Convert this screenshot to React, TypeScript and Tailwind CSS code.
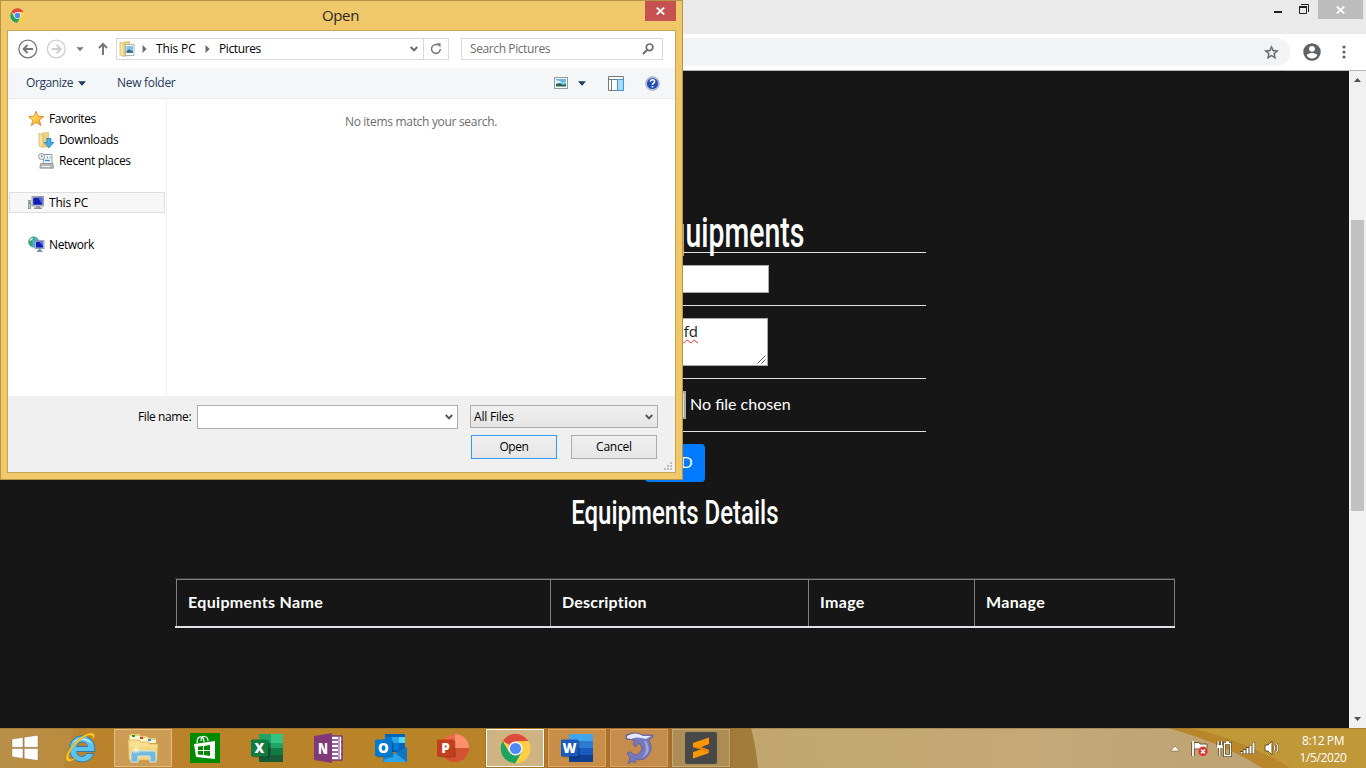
import React from "react";

const UI = "font-['Open_Sans','Noto_Sans',sans-serif]";

function ChromeLogo({ size }: { size: number }) {
  return (
    <svg width={size} height={size} viewBox="0 0 48 48">
      <circle cx="24" cy="24" r="23" fill="#ffcd46" />
      <path d="M24 24 4.1 12.5A23 23 0 0 1 43.9 12.5L24 13Z" fill="#dd4b3e" />
      <path d="M4.1 12.5A23 23 0 0 0 24 47L34 29.5 24 24 14 29.5Z" fill="#1da362" />
      <path d="M24 13H44.2A23 23 0 0 1 24 47L34 29Z" fill="#ffcd46" />
      <circle cx="24" cy="24" r="11" fill="#f3f3f3" />
      <circle cx="24" cy="24" r="8.7" fill="#4c8bf5" />
    </svg>
  );
}

function Chevron({ color = "#555" }: { color?: string }) {
  return (
    <svg width="8" height="6" viewBox="0 0 8 6">
      <path d="M.8 1 4 4.4 7.2 1" fill="none" stroke={color} strokeWidth="1.9" />
    </svg>
  );
}

function DownTri({ color }: { color: string }) {
  return (
    <svg width="8" height="5" viewBox="0 0 8 5">
      <path d="M0 .3H8L4 4.7Z" fill={color} />
    </svg>
  );
}

function Crumb() {
  return (
    <svg width="5" height="8" viewBox="0 0 5 8">
      <path d="M.5 0V8L4.7 4Z" fill="#6d6d6d" />
    </svg>
  );
}

function Folder({ kind }: { kind: "pictures" | "downloads" }) {
  return (
    <svg width="16" height="16" viewBox="0 0 16 16">
      <path d="M4.5 1 10.5 .5V15H4.5Z" fill="#ecd283" stroke="#c9a64b" strokeWidth=".5" />
      <path d="M1 1 5 2.8V15.6L1 14Z" fill="#f6e3a0" stroke="#cdaa50" strokeWidth=".6" />
      {kind === "pictures" ? (
        <g>
          <rect x="6.4" y="3.4" width="8.6" height="11" fill="#f8fafb" stroke="#9ba7ad" strokeWidth=".8" />
          <rect x="7.5" y="5" width="6.5" height="6.8" fill="#7fc1ec" />
          <path d="M7.5 10 10 8.6 14 10.4V11.8H7.5Z" fill="#26657d" />
        </g>
      ) : (
        <path d="M8.8 6.5H12.9V10.5H15.7L11 15.8 6.3 10.5H8.8Z" fill="#49ade9" stroke="#197bb8" strokeWidth=".8" />
      )}
    </svg>
  );
}

function StarIcon() {
  return (
    <svg width="17" height="16" viewBox="0 0 17 16">
      <defs>
        <linearGradient id="gold" x1="0" y1="0" x2="1" y2="1">
          <stop offset="0" stopColor="#fff19a" />
          <stop offset=".55" stopColor="#ffc83e" />
          <stop offset="1" stopColor="#f08b20" />
        </linearGradient>
      </defs>
      <path d="M8 .2 10 5.1 15.8 5.6 11.3 9 13 14.5 8.1 11.3 3.4 14.5 4.8 9.1.7 5.6 6.1 5.1Z" fill="url(#gold)" stroke="#df862b" strokeWidth=".9" />
    </svg>
  );
}

function RecentIcon() {
  return (
    <svg width="16" height="16" viewBox="0 0 16 16">
      <path d="M5.5 1.5H14V10.5H5.5Z" fill="#f7fafc" stroke="#929a9f" />
      <path d="M2.5 10.5H15L15.5 15.2H1.8Z" fill="#b4b8ba" stroke="#83898d" strokeWidth=".7" />
      <path d="M4 13.5H12" stroke="#eef1f2" />
      <path d="M9 4.5h1M11.5 4.5h1M7 7.5H12" stroke="#2d94cc" strokeWidth="1.4" />
      <circle cx="3.6" cy="3.5" r="3" fill="#eff3f5" stroke="#919aa0" />
      <path d="M3.5 1.8V3.6H5" fill="none" stroke="#68757e" strokeWidth=".8" />
    </svg>
  );
}

function PcIcon() {
  return (
    <svg width="17" height="16" viewBox="0 0 17 16">
      <rect x=".6" y="5.5" width="2" height="8.2" fill="#bcc4c9" stroke="#788087" strokeWidth=".7" />
      <path d="M1 8h1.2" stroke="#35a844" strokeWidth="1.5" />
      <rect x="4" y="1.4" width="11.6" height="9.6" fill="#c7ced4" stroke="#899198" strokeWidth=".8" />
      <rect x="5.2" y="2.6" width="9.2" height="7.2" fill="#101eb3" />
      <path d="M10 2.6H14.4V9.8Z" fill="#5265dd" />
      <path d="M8 11.3H12V12.6H14V14H6V12.6H8Z" fill="#8e9497" />
    </svg>
  );
}

function NetworkIcon() {
  return (
    <svg width="17" height="17" viewBox="0 0 17 17">
      <circle cx="5.7" cy="6" r="5.2" fill="#4bb1e5" stroke="#4792ba" strokeWidth=".6" />
      <path d="M2 3Q5 0 7 1L6 4 4 5 5 8 3 10Q0 7 2 3Z" fill="#38aa4e" />
      <path d="M2 3Q4 1.500 5.500 2L4 4 2 5Z" fill="#e4f7f2" />
      <rect x="7" y="4.7" width="9" height="8" fill="#c6d3df" stroke="#738698" strokeWidth=".7" />
      <rect x="8" y="5.6" width="7" height="6" fill="#111fb9" />
      <path d="M11 5.6H15V10Z" fill="#5872e6" />
      <path d="M10.5 13H12.8V14.5H14.5V16H9V14.5H10.5Z" fill="#778f9e" />
    </svg>
  );
}

function SideItem({ icon, label, className }: { icon: React.ReactNode; label: string; className: string }) {
  return (
    <div className={`flex h-[21px] items-center text-[12px] text-black ${className}`}>
      <span className="flex w-[21px] shrink-0">{icon}</span>
      <span className="whitespace-nowrap">{label}</span>
    </div>
  );
}

function OpenDialog() {
  return (
    <section className={`absolute left-0 top-0 flex h-[480px] w-[683px] flex-col border border-[#b39548] bg-[#f0c869] px-[6px] pb-[6px] text-[12px] ${UI}`}>
      <header className="flex h-[29px] shrink-0">
        <div className="flex w-[30px] items-center pl-[3px]"><ChromeLogo size={15} /></div>
        <div className="flex-1 pr-px pt-[4px] text-center text-[15px] leading-[21px] tracking-[-0.4px] text-[#2a2923]">Open</div>
        <button className="flex h-[20px] w-[31px] items-center justify-center bg-[#c75050]">
          <svg width="9" height="8" viewBox="0 0 9 8"><path d="M.8.5 8.2 7.5M8.2.5.8 7.5" stroke="#fff" strokeWidth="1.8" /></svg>
        </button>
      </header>

      <div className="flex h-[443px] w-[669px] flex-col border border-[#c6a555] bg-white">
        <div className="flex h-[37px] shrink-0 items-center pb-px pl-[10px]">
          <svg width="20" height="20" viewBox="0 0 20 20"><circle cx="9.8" cy="10" r="8.9" fill="none" stroke="#777" strokeWidth="1.3" /><path d="M15 10H6M9.5 6 5.7 10 9.5 14" fill="none" stroke="#777" strokeWidth="2" /></svg>
          <svg className="ml-[9px]" width="20" height="20" viewBox="0 0 20 20"><circle cx="9.3" cy="10" r="8.9" fill="none" stroke="#cfcfcf" strokeWidth="1.3" /><path d="M4.6 10H13.6M9.6 6 13.6 10 9.6 14" fill="none" stroke="#cfcfcf" strokeWidth="2" /></svg>
          <span className="ml-[9px] flex"><svg width="8" height="5" viewBox="0 0 8 5"><path d="M.5.3H7.5L4 4.3Z" fill="#777" /></svg></span>
          <svg className="ml-[13px]" width="12" height="14" viewBox="0 0 12 14"><path d="M6 13V2M2 6 6 2 10 6" fill="none" stroke="#777" strokeWidth="2" /></svg>
          <div className="ml-[7px] flex h-[22px] w-[333px] items-center border border-[#d9d9d9]">
            <span className="ml-[2px] flex w-[22px]"><Folder kind="pictures" /></span>
            <span className="ml-px flex"><Crumb /></span>
            <span className="ml-[9px] w-[42px] whitespace-nowrap tracking-[-0.15px]">This PC</span>
            <span className="ml-[7px] flex"><Crumb /></span>
            <span className="ml-[9px] flex-1 tracking-[-0.4px]">Pictures</span>
            <span className="mr-[5px] flex"><Chevron color="#666" /></span>
            <span className="flex h-[20px] w-[25px] items-center justify-center border-l border-[#d9d9d9]">
              <svg width="12" height="12" viewBox="0 0 12 12"><path d="M8 2.1A4.4 4.4 0 1 0 10.3 6" fill="none" stroke="#777" strokeWidth="1.5" /><path d="M6.4.2H10.5V4.4Z" fill="#777" /></svg>
            </span>
          </div>
          <div className="ml-[12px] flex h-[22px] w-[202px] items-center justify-between border border-[#d9d9d9] pl-[8px] pr-[8px] tracking-[-0.4px] text-[#6d6d6d]">
            <span>Search Pictures</span>
            <svg width="12" height="12" viewBox="0 0 12 12"><circle cx="7.6" cy="4.3" r="3.3" fill="none" stroke="#6d6d6d" strokeWidth="1.7" /><path d="M5.2 6.8 1 11" stroke="#6d6d6d" strokeWidth="2" /></svg>
          </div>
        </div>

        <div className="flex h-[31px] shrink-0 items-center border-b border-[#e8eaec] bg-[#f5f6f7] text-[#1e395b]">
          <span className="ml-[18px] w-[50px] whitespace-nowrap tracking-[-0.4px]">Organize</span>
          <span className="ml-[2px] flex"><DownTri color="#1e395b" /></span>
          <span className="ml-[31px] flex-1 tracking-[-0.3px]">New folder</span>
          <svg width="14" height="12" viewBox="0 0 14 12"><rect x=".5" y=".5" width="13" height="11" fill="#fff" stroke="#939aa1" /><path d="M2 2H12V9H2Z" fill="#65b8e5" /><path d="M2 3 6 4 8 6 12 5V6L2 7Z" fill="#d9f0fa" /><path d="M2 7 6 6 9 8 12 7V9.6H2Z" fill="#276550" /></svg>
          <span className="ml-[10px] flex"><DownTri color="#1e395b" /></span>
          <svg className="ml-[22px]" width="17" height="15" viewBox="0 0 17 15"><path d="M.5.5H15.5V14.5H.5ZM.5 3.5H9.5M3.5 3.5V14.5" fill="#fff" stroke="#777" /><path d="M9.5 3.5H15.5V14.5H9.5Z" fill="#a9dafa" stroke="#3d99dc" /></svg>
          <svg className="ml-[20px] mr-[15px]" width="15" height="15" viewBox="0 0 15 15"><circle cx="7.5" cy="7.5" r="6.8" fill="#c7d2e4" stroke="#8390ac" strokeWidth=".7" /><circle cx="7.5" cy="7.5" r="5.6" fill="#2450b9" /><path d="M5.4 5.7Q5.6 3.7 7.7 3.8 9.9 4 9.5 6 9.3 6.8 8 7.6 7.5 8 7.5 9M7.5 10V11.5" fill="none" stroke="#fff" strokeWidth="1.5" /></svg>
        </div>

        <div className="flex h-[297px] shrink-0">
          <nav className="w-[159px] border-r border-[#f2f2f2] pt-[9px]">
            <SideItem className="pl-[20px] tracking-[-0.45px]" icon={<StarIcon />} label="Favorites" />
            <SideItem className="pl-[30px] tracking-[-0.35px]" icon={<Folder kind="downloads" />} label="Downloads" />
            <SideItem className="pl-[30px] tracking-[-0.38px]" icon={<RecentIcon />} label="Recent places" />
            <SideItem className="ml-px mt-[21px] w-[156px] border border-[#dedede] bg-[#f7f7f7] pl-[18px] tracking-[-0.2px]" icon={<PcIcon />} label="This PC" />
            <SideItem className="mt-[21px] pl-[20px] tracking-[-0.4px]" icon={<NetworkIcon />} label="Network" />
          </nav>
          <div className="flex-1 pt-[14px] text-center leading-[18px] tracking-[-0.31px] text-[#6d6d6d]">No items match your search.</div>
        </div>

        <footer className="relative flex-1 bg-[#f0f0f0] pt-[9px]">
          <div className="flex h-[24px]">
            <label className="ml-[130px] w-[59px] whitespace-nowrap leading-[23px] tracking-[-0.4px] text-black">File name:</label>
            <div className="flex h-[24px] w-[261px] items-center justify-end border border-[#abadb3] bg-white pr-[4px]"><Chevron /></div>
            <div className="ml-[12px] flex h-[23px] w-[188px] items-center justify-between border border-[#acacac] bg-gradient-to-b from-[#f0f0f0] to-[#e5e5e5] pl-[3px] pr-[4px] tracking-[-0.2px]"><span>All Files</span><Chevron /></div>
          </div>
          <div className="ml-[463px] mt-[6px] flex gap-[14px]">
            <button className="h-[24px] w-[86px] border border-[#3399ff] bg-gradient-to-b from-[#f0f0f0] to-[#e5e5e5] leading-[22px] tracking-[-0.4px]">Open</button>
            <button className="h-[24px] w-[86px] border border-[#acacac] bg-gradient-to-b from-[#f0f0f0] to-[#e5e5e5] leading-[22px] tracking-[-0.2px]">Cancel</button>
          </div>
          <svg className="absolute bottom-[2px] right-[3px]" width="8" height="8" viewBox="0 0 8 8"><path d="M6 0h2v2H6zM3 3h2v2H3zM6 3h2v2H6zM0 6h2v2H0zM3 6h2v2H3zM6 6h2v2H6z" fill="#bdbdbd" /></svg>
        </footer>
      </div>
    </section>
  );
}

function BrowserChrome() {
  return (
    <div className="h-[71px] shrink-0 border-b border-[#b5b5b5] bg-white">
      <div className="flex h-[34px] items-start justify-end bg-[#eaeaea] pr-[3px]">
        <svg className="mr-[17px] mt-[11px]" width="8" height="2"><rect width="8" height="2" fill="#222" /></svg>
        <svg className="mr-[9px] mt-[4px]" width="10" height="10" viewBox="0 0 10 10"><path d="M2 .5H9.5V8M.5 3H7.5V9.5H.5Z" fill="none" stroke="#222" strokeWidth="1" /><path d="M0 3H8" stroke="#222" strokeWidth="2" /></svg>
        <div className="flex h-[19px] w-[45px] items-center justify-center bg-[#bcbcbc]"><svg width="9" height="8" viewBox="0 0 9 8"><path d="M.8.5 8.2 7.5M8.2.5.8 7.5" stroke="#fff" strokeWidth="1.8" /></svg></div>
      </div>
      <div className="flex h-[36px] items-center justify-end pr-[20px]">
        <div className="mr-[12px] flex h-[28px] w-[1190px] items-center justify-end rounded-full bg-[#f1f3f4] pr-[10px]">
          <svg width="17" height="17" viewBox="0 0 24 24"><path fill="#5f6368" stroke="#5f6368" strokeWidth=".4" d="M22 9.24l-7.19-.62L12 2 9.19 8.63 2 9.24l5.46 4.73L5.82 21 12 17.27 18.18 21l-1.63-7.03L22 9.24zM12 15.4l-3.76 2.27 1-4.28-3.32-2.88 4.38-.38L12 6.1l1.71 4.04 4.38.38-3.32 2.88 1 4.28L12 15.4z" /></svg>
        </div>
        <svg width="20" height="20" viewBox="0 0 24 24"><path fill="#5f6368" d="M12 1.5a10.5 10.5 0 1 0 0 21 10.5 10.5 0 0 0 0-21zm0 3.2a3.5 3.5 0 1 1 0 7 3.5 3.5 0 0 1 0-7zm0 15a7.6 7.6 0 0 1-6.3-3.3c0-2.1 4.2-3.2 6.3-3.2s6.3 1.1 6.3 3.2A7.6 7.6 0 0 1 12 19.7z" /></svg>
        <svg className="ml-[20px]" width="4" height="14" viewBox="0 0 4 14"><circle cx="2" cy="2" r="1.6" fill="#5f6368" /><circle cx="2" cy="7" r="1.6" fill="#5f6368" /><circle cx="2" cy="12" r="1.6" fill="#5f6368" /></svg>
      </div>
    </div>
  );
}

function Page() {
  return (
    <div className="flex h-[657px] shrink-0">
      <main className="flex w-[1349px] flex-col bg-[#161616] font-['Lato',sans-serif] text-[16px] text-white">
        <form className="ml-[424px] w-[502px]">
          <div className="flex h-[181px] items-end justify-center pr-[13px]">
            <h1 className="mb-[-8px] origin-center scale-x-[0.677] whitespace-nowrap font-['Roboto',sans-serif] text-[42px] font-medium leading-[54px]">Add New Equipments</h1>
          </div>
          <div className="h-[53px] border-t border-[#dee2e6] pl-[158px] pt-[12px]">
            <div className="h-[28px] w-[187px] border border-[#a9a9a9] bg-white" />
          </div>
          <div className="h-[73px] border-t border-[#dee2e6] pl-[158px] pt-[12px]">
            <div className="relative h-[48px] w-[186px] border border-[#a9a9a9] bg-white pr-[69px] text-right text-[#222]">
              <span className="block font-['Open_Sans',sans-serif] text-[15px] leading-[25px] underline decoration-[#f22] decoration-wavy decoration-1 underline-offset-[2px]">dfd</span>
              <svg className="absolute bottom-px right-px" width="9" height="9" viewBox="0 0 9 9"><path d="M.5 8.5 8.5.5M4.5 8.5 8.5 4.5" stroke="#666" strokeWidth="1" /></svg>
            </div>
          </div>
          <div className="flex h-[54px] border-y border-[#dee2e6] pl-[158px] pt-[12px]">
            <div className="h-[28px] w-[104px] border-2 border-[#aaa] bg-[#ddd]" />
            <span className="ml-[4px] leading-[26px]">No file chosen</span>
          </div>
          <div className="ml-[221px] mt-[12px] h-[38px] w-[60px] rounded-[4px] bg-[#007bff] text-center leading-[36px]">ADD</div>
        </form>
        <div className="flex h-[62px] w-[1349px] items-center justify-center pb-[2px]">
          <h2 className="scale-x-[0.706] whitespace-nowrap font-['Roboto',sans-serif] text-[34px] font-medium">Equipments Details</h2>
        </div>
        <div className="ml-[175px] mt-[34px] grid h-[50px] w-[1000px] grid-cols-[376px_258px_166px_200px] border-b-2 border-t border-b-[#dee2e6] border-t-[#393939] font-bold leading-[44px] tracking-[0.33px]">
          <div className="ml-px border-l border-t border-[#808080] pl-[11px]">Equipments Name</div>
          <div className="ml-[-1px] border-l border-t border-[#808080] pl-[11px] tracking-[0.2px]">Description</div>
          <div className="ml-[-1px] border-l border-t border-[#808080] pl-[11px]">Image</div>
          <div className="ml-[-1px] border-x border-t border-[#808080] pl-[11px]">Manage</div>
        </div>
      </main>
      <aside className="flex w-[17px] flex-col items-center bg-[#f1f1f1] pb-[7px] pt-[7px]">
        <svg width="7" height="4"><path d="M0 4H7L3.5 0Z" fill="#505050" /></svg>
        <div className="mt-[138px] h-[291px] w-[13px] bg-[#c1c1c1]" />
        <svg className="mt-auto" width="7" height="4"><path d="M0 0H7L3.5 4Z" fill="#505050" /></svg>
      </aside>
    </div>
  );
}

function OfficeTile({ letter, fill }: { letter: string; fill: string }) {
  return (
    <g>
      <rect x="1.5" y="8.5" width="17" height="17" rx="1" fill="#000" opacity=".25" />
      <rect x="0" y="7.5" width="17" height="17" rx="1" fill={fill} />
      <text x="8.5" y="20.7" textAnchor="middle" fontFamily="Open Sans, sans-serif" fontWeight="800" fontSize="13.5" fill="#fff">{letter}</text>
    </g>
  );
}

function AppIcon({ name }: { name: string }) {
  if (name === "chrome") return <ChromeLogo size={31} />;
  return (
    <svg width="32" height="32" viewBox="0 0 32 32">
      {name === "ie" && (
        <g>
          <path d="M29 21.5A12.3 12.3 0 0 1 17 30 12.5 12.5 0 0 1 4.5 17.5 12.5 12.5 0 0 1 29.8 15.5V19.5H11.5Q12.5 24.5 17 24.5 20.2 24.5 21.5 21.5ZM11.7 14.5H22.5Q21.5 10 17.2 10 12.8 10 11.7 14.5Z" fill="#5dc3ee" stroke="#2676ab" strokeWidth=".9" fillRule="evenodd" />
          <path d="M6 13Q10 6.5 17 6.3 25 6.5 28 13Q23 8 17 8 10 8 6 13Z" fill="#b9ebfb" />
          <path d="M3 29C-4 27 9 7 22 2 30-1 31 3 28 7 28 3 25 2 20 5 9 11 0 25 5 27 7 28 10 26 12 25 8 29 5 30 3 29Z" fill="#fac921" stroke="#cf9a17" strokeWidth=".4" />
        </g>
      )}
      {name === "explorer" && (
        <g>
          <path d="M2 3 4 2H12L14 4H20L22 6H29V10H2Z" fill="#e9cc75" />
          <rect x="3" y="4" width="10" height="4" fill="#fff7cf" /><rect x="11" y="6" width="10" height="4" fill="#fff7cf" /><rect x="19" y="8" width="10" height="3" fill="#fff7cf" />
          <path d="M5 3h3v2H5z" fill="#22a047" /><path d="M13 5h3v2h-3z" fill="#da3b2f" /><path d="M21 7h3v2h-3z" fill="#3292dc" />
          <path d="M1 8H12L14 10H22L23 12H31L30 28H2Z" fill="#f8df8e" stroke="#d3a94b" strokeWidth=".7" />
          <path d="M2 15H30L29 27H3Z" fill="#efcf70" opacity=".6" />
          <path d="M4 21Q4 19 7 19H26Q29 19 29 21V30H23V24H11V30H4Z" fill="#76b9de" stroke="#cde9f5" />
          <path d="M9 14V22M5 18H13M6 15 12 21M12 15 6 21" stroke="#fff8d0" strokeWidth=".8" />
        </g>
      )}
      {name === "store" && (
        <g>
          <rect x="1" y="1" width="30" height="30" fill="#008a00" />
          <path d="M5 12 26 9V27L7 25Z" fill="#fff" />
          <path d="M8 11C8 2 15 4 15 10M12 9C12 2 19 4 19 9" fill="none" stroke="#fff" strokeWidth="1.2" />
          <path d="M9 14.5 14 14V18H9ZM15 14 21 13V18H15ZM9 19H14V23L9 22.5ZM15 19H21V24L15 23Z" fill="#008a00" />
        </g>
      )}
      {name === "excel" && (
        <g>
          <path d="M8 2H20V11H8Z" fill="#21a366" /><path d="M20 2H32V11H20Z" fill="#33c481" /><path d="M8 11H20V20H8Z" fill="#107c41" /><path d="M20 11H32V16H20Z" fill="#21a366" /><path d="M8 16H32V30H8Z" fill="#185c37" /><path d="M20 16H32V23H20Z" fill="#107c41" />
          <OfficeTile letter="X" fill="#107c41" />
        </g>
      )}
      {name === "onenote" && (
        <g>
          <path d="M15 4H29V28H15Z" fill="#fff" stroke="#79377c" strokeWidth="1.5" />
          <path d="M17 8H25M17 12H25M17 16H25M17 20H25M17 24H25" stroke="#79377c" strokeWidth="1.5" />
          <path d="M26 5V27M28 10H30M28 16H30M28 22H30" stroke="#79377c" />
          <path d="M1 4 19 1V31L1 28Z" fill="#80397b" />
          <text x="10" y="22" textAnchor="middle" fontFamily="Open Sans, sans-serif" fontWeight="800" fontSize="16" fill="#fff" textLength="10" lengthAdjust="spacingAndGlyphs">N</text>
        </g>
      )}
      {name === "outlook" && (
        <g>
          <path d="M10 2H30V20H10Z" fill="#0364b8" /><path d="M10 5H17V11H10Z" fill="#0078d4" /><path d="M17 5H24V11H17Z" fill="#28a8ea" /><path d="M24 5H30V11H24Z" fill="#50d9ff" /><path d="M17 11H24V18H17Z" fill="#0078d4" /><path d="M24 11H30V18H24Z" fill="#0364b8" />
          <path d="M8 16 20 23 32 15V30H8Z" fill="#1490df" /><path d="M32 15V30L18 22Z" fill="#1275c2" /><path d="M8 30 20 21 32 30Z" fill="#28a8ea" />
          <OfficeTile letter="O" fill="#0078d4" />
        </g>
      )}
      {name === "powerpoint" && (
        <g>
          <circle cx="18" cy="16" r="14" fill="#ed6c47" /><path d="M18 2A14 14 0 0 1 32 16H18Z" fill="#ff8f6b" /><path d="M4 16A14 14 0 0 0 32 16Z" fill="#d35230" />
          <OfficeTile letter="P" fill="#c43e1c" />
        </g>
      )}
      {name === "word" && (
        <g>
          <path d="M8 2H32V9H8Z" fill="#41a5ee" /><path d="M8 9H32V16H8Z" fill="#2b7cd3" /><path d="M8 16H32V23H8Z" fill="#185abd" /><path d="M8 23H32V30H8Z" fill="#103f91" />
          <OfficeTile letter="W" fill="#185abd" />
        </g>
      )}
      {name === "dolphin" && (
        <g>
          <path d="M3 3Q12-1 20 3L30 3Q31 5 26 8 32 20 21 27 17 29 13 27L12 31 9 29 5 32 7 26 4 21Q8 18 11 23 19 22 19 15 17 12 15 11L13 15Q8 12 12 9 8 7 3 7Z" fill="#7678bd" stroke="#575896" strokeWidth=".7" />
          <path d="M4 4Q13-1 20 4L28 4 23 7Q13 4 8 7L4 6Z" fill="#e5e8fa" />
          <path d="M23 9Q30 20 19 26 26 18 21 9Z" fill="#a0a4df" />
        </g>
      )}
      {name === "sublime" && (
        <g>
          <rect width="32" height="32" rx="2" fill="#484848" />
          <path d="M8 11 24 5.5V12L16 15 24 18V21L8 26.5V20L16 17.5 8 15Z" fill="#ff9800" />
          <path d="M8 15 16 17.5 24 21V18L16 15Z" fill="#e98208" />
        </g>
      )}
    </svg>
  );
}

const apps = [
  { name: "ie", box: "border-transparent" },
  { name: "explorer", box: "border-[#e0bd87] bg-[#d4a767]/70" },
  { name: "store", box: "border-transparent" },
  { name: "excel", box: "border-transparent" },
  { name: "onenote", box: "border-transparent" },
  { name: "outlook", box: "border-transparent" },
  { name: "powerpoint", box: "border-transparent" },
  { name: "chrome", box: "border-white bg-[#cfb483] shadow-[0_0_0_1px_#a67025]" },
  { name: "word", box: "border-[#daa86c] bg-[#c88e48] shadow-[0_0_0_1px_#a86b24]" },
  { name: "dolphin", box: "border-[#d6a365] bg-[#c58d4d] shadow-[0_0_0_1px_#a86b24]" },
  { name: "sublime", box: "border-[#c4aa78] bg-[#ab8d55] shadow-[0_0_0_1px_#957136]" },
];

function Taskbar() {
  return (
    <div className="relative flex h-[40px] shrink-0 bg-[#b98429]">
      <svg className="absolute inset-0" width="1366" height="40" preserveAspectRatio="none">
        <defs>
          <linearGradient id="barLeft"><stop offset="0" stopColor="#b58c42" /><stop offset=".09" stopColor="#b88534" /><stop offset=".12" stopColor="#ba822a" /><stop offset=".6" stopColor="#b98428" /><stop offset=".87" stopColor="#a96f28" /><stop offset="1" stopColor="#a0803f" /></linearGradient>
          <linearGradient id="barSand"><stop offset="0" stopColor="#c1a76f" /><stop offset=".5" stopColor="#c4a978" /><stop offset="1" stopColor="#b99e6f" /></linearGradient>
        </defs>
        <rect width="770" height="40" fill="url(#barLeft)" />
        <path d="M0 0H74L63 40H0Z" fill="#c29a55" opacity=".3" />
        <path d="M751 0H1366V40H758Q756 18 751 0Z" fill="url(#barSand)" />
        <path d="M1168 0H1366V40H1262Q1225 16 1168 0Z" fill="#b9862c" />
        <path d="M1190 0H1366V40H1290Q1245 12 1190 0Z" fill="#c09838" />
        <path d="M0 .5H1366" stroke="#80622c" opacity=".4" />
      </svg>
      <div className="relative flex flex-1">
        <div className="flex w-[50px] items-center justify-center">
          <svg width="28" height="26" viewBox="0 0 28 26"><path d="M1 4 12 2.4V12.3H1ZM13.2 2.2 27 .3V12.3H13.2ZM1 13.5H12V23.4L1 21.8ZM13.2 13.5H27V25.5L13.2 23.6Z" fill="#fff" stroke="#80673b" strokeWidth=".4" /></svg>
        </div>
        {apps.map((app) => (
          <div key={app.name} className="flex w-[62px] justify-center pt-px">
            <div className={`flex h-[38px] w-[58px] items-center justify-center border ${app.box}`}><AppIcon name={app.name} /></div>
          </div>
        ))}
      </div>
      <div className="relative flex items-center">
        <svg className="mr-[11px]" width="10" height="7" viewBox="0 0 10 7"><path d="M.5 6 5 1 9.5 6Z" fill="#fff" stroke="#766337" strokeWidth=".6" /></svg>
        <svg className="mr-[7px] mt-[2px]" width="18" height="18" viewBox="0 0 18 18"><path d="M2 2V16" stroke="#5e4b26" strokeWidth="3.5" /><path d="M3 2.5H8L9 4H16V11H9L8 9H3Z" fill="#fff" stroke="#6a5427" /><path d="M2 1V16" stroke="#fff" strokeWidth="1.8" /><circle cx="12" cy="11.5" r="5" fill="#dc3028" stroke="#f0b9a8" strokeWidth=".5" /><path d="M10 9.5 14 13.5M14 9.5 10 13.5" stroke="#fff" strokeWidth="1.7" /></svg>
        <svg className="mr-[8px]" width="16" height="17" viewBox="0 0 16 17"><path d="M2 1V5M5.5 1V5M.5 5.5H7M3.8 6V16M8.5 3.5V15.5H14.5V3.5ZM10 2H13" fill="none" stroke="#5f4a20" strokeWidth="3" /><path d="M2 1V5M5.5 1V5M3.8 6V16M8.5 3.5V15.5H14.5V3.5ZM10 2H13" fill="none" stroke="#fff" strokeWidth="1.3" /><path d="M1 5H6.7V8H1Z" fill="#fff" /></svg>
        <svg className="mr-[8px]" width="16" height="14" viewBox="0 0 16 14"><path d="M1.5 13V10M4.5 13V8M7.5 13V6M10.5 13V4M13.5 13V1" stroke="#634c20" strokeWidth="3.2" /><path d="M1.5 12.5V11M4.5 12.5V9M7.5 12.5V7M10.5 12.5V4.5M13.5 12.5V1.5" stroke="#fff" strokeWidth="1.9" /></svg>
        <svg className="mr-[18px]" width="17" height="16" viewBox="0 0 17 16"><path d="M1 5H4L8 1V15L4 11H1Z" fill="#fff" stroke="#66501f" /><path d="M10 5.5Q11.5 8 10 10.5M12.3 3.5Q15.5 8 12.3 12.5" fill="none" stroke="#684f1c" strokeWidth="2.3" /><path d="M10 5.5Q11.5 8 10 10.5M12.3 3.5Q15.5 8 12.3 12.5" fill="none" stroke="#fff" strokeWidth="1.1" /></svg>
        <div className={`mr-[19px] mt-px w-[48px] whitespace-nowrap text-center text-[12px] leading-[17px] tracking-[-0.4px] text-white ${UI}`}>
          <div>8:12 PM</div>
          <div>1/5/2020</div>
        </div>
      </div>
    </div>
  );
}

export default function App() {
  return (
    <div className="relative flex h-[768px] w-[1366px] flex-col overflow-hidden bg-[#161616]">
      <BrowserChrome />
      <Page />
      <Taskbar />
      <OpenDialog />
    </div>
  );
}
